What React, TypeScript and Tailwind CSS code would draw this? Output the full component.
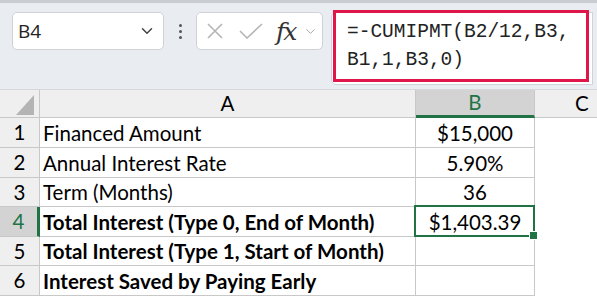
import { ChevronDown } from "lucide-react";

const rows = [
  { n: "1", a: "Financed Amount", b: "$15,000", bold: false, h: "h-[30px]" },
  { n: "2", a: "Annual Interest Rate", b: "5.90%", bold: false, h: "h-[30px]" },
  { n: "3", a: "Term (Months)", b: "36", bold: false, h: "h-[29px]" },
  { n: "4", a: "Total Interest (Type 0, End of Month)", b: "$1,403.39", bold: true, h: "h-[30px]" },
  { n: "5", a: "Total Interest (Type 1, Start of Month)", b: "", bold: true, h: "h-[29px]" },
  { n: "6", a: "Interest Saved by Paying Early", b: "", bold: true, h: "h-[30px]" },
];

function FormulaBar() {
  return (
    <div className="relative h-[89px] bg-[#e9edf1] border-t-[3px] border-[#c9ccd0]">
      <div className="flex items-start pt-[9px] pl-[12px]">
        <div className="flex h-[38px] w-[152px] items-center justify-between rounded-[5px] border border-[#cfd2d6] bg-white pl-[5px] pr-[7px]">
          <span className="text-[19px] text-[#222] font-['Open_Sans',sans-serif]">B4</span>
          <ChevronDown size={18} strokeWidth={2} className="text-[#444]" />
        </div>
        <div className="flex h-[38px] w-[32px] flex-col items-center justify-center gap-[3px]">
          <span className="h-[3px] w-[3px] rounded-full bg-[#555]" />
          <span className="h-[3px] w-[3px] rounded-full bg-[#555]" />
          <span className="h-[3px] w-[3px] rounded-full bg-[#555]" />
        </div>
        <div className="flex h-[38px] w-[127px] items-center rounded-[5px] border border-[#cfd2d6] bg-white pl-[9px]">
          <svg width="18" height="18" viewBox="0 0 18 18" className="mr-[15px]">
            <path d="M2 2 L16 16 M16 2 L2 16" stroke="#b5b5b5" strokeWidth="1.6" fill="none" />
          </svg>
          <svg width="24" height="16" viewBox="0 0 24 16" className="mr-[13px]">
            <path d="M1 8 L8 15 L23 1" stroke="#b5b5b5" strokeWidth="1.6" fill="none" />
          </svg>
          <span className="text-[25px] italic leading-none text-[#333] font-['DejaVu_Serif',serif] tracking-[-2px]">fx</span>
          <ChevronDown size={15} strokeWidth={1.6} className="ml-[8px] text-[#aaa]" />
        </div>
        <div className="ml-[8px] h-[73px] w-[262px] rounded-l-[5px] border border-[#cfd2d6] bg-white" />
      </div>
      <div className="absolute left-[333px] top-[7px] h-[72px] w-[256px] border-[3px] border-[#e0164b] pl-[11px] pt-[5px] text-[19.5px] leading-[28px] text-[#222] font-['Liberation_Mono',monospace]">
        <div>=-CUMIPMT(B2/12,B3,</div>
        <div>B1,1,B3,0)</div>
      </div>
    </div>
  );
}

export default function App() {
  return (
    <div className="w-[597px] h-[298px] overflow-hidden bg-white font-['Lato',sans-serif] text-[20.5px] text-black">
      <FormulaBar />
      <div className="flex h-[29px] bg-[#efefef] border-t border-[#d6d6d6]">
        <div className="relative w-[40px] border-r border-[#c8c8c8] border-b">
          <svg width="18" height="20" viewBox="0 0 18 20" className="absolute left-[16px] top-[5px]">
            <path d="M18 0 L18 20 L0 20 Z" fill="#b4b4b4" />
          </svg>
        </div>
        <div className="flex w-[376px] items-center justify-center border-r border-b border-[#c8c8c8]">A</div>
        <div className="flex w-[119px] items-center justify-center border-r border-[#c8c8c8] bg-[#d3d3d3] border-b-[3px] border-b-[#217346] text-[#217346]">
          B
        </div>
        <div className="flex flex-1 items-center pl-[40px] border-b border-[#c8c8c8]">C</div>
      </div>
      {rows.map((r) => {
        const sel = r.n === "4";
        return (
          <div key={r.n} className={`flex ${r.h}`}>
            <div
              className={`flex w-[40px] items-center justify-center border-b border-[#c8c8c8] ${
                sel ? "bg-[#d3d3d3] text-[#217346] border-r-[3px] border-r-[#217346]" : "bg-[#efefef] border-r"
              }`}
            >
              {r.n}
            </div>
            <div className={`flex w-[376px] items-center pl-[3px] pt-[1px] border-r border-b border-[#c8c8c8] ${r.bold ? "font-bold" : ""}`}>
              {r.a}
            </div>
            <div className={`relative flex w-[119px] items-center justify-center pt-[1px] border-r border-b border-[#c8c8c8] ${sel ? "z-10" : ""}`}>
              {r.b}
              {sel && (
                <div className="absolute -left-[2px] -top-[2px] -right-[1px] -bottom-[1px] border-2 border-[#217346]">
                  <div className="absolute -right-[5px] -bottom-[5px] h-[9px] w-[9px] bg-[#217346] border border-white" />
                </div>
              )}
            </div>
            <div className="flex-1" />
          </div>
        );
      })}
    </div>
  );
}
